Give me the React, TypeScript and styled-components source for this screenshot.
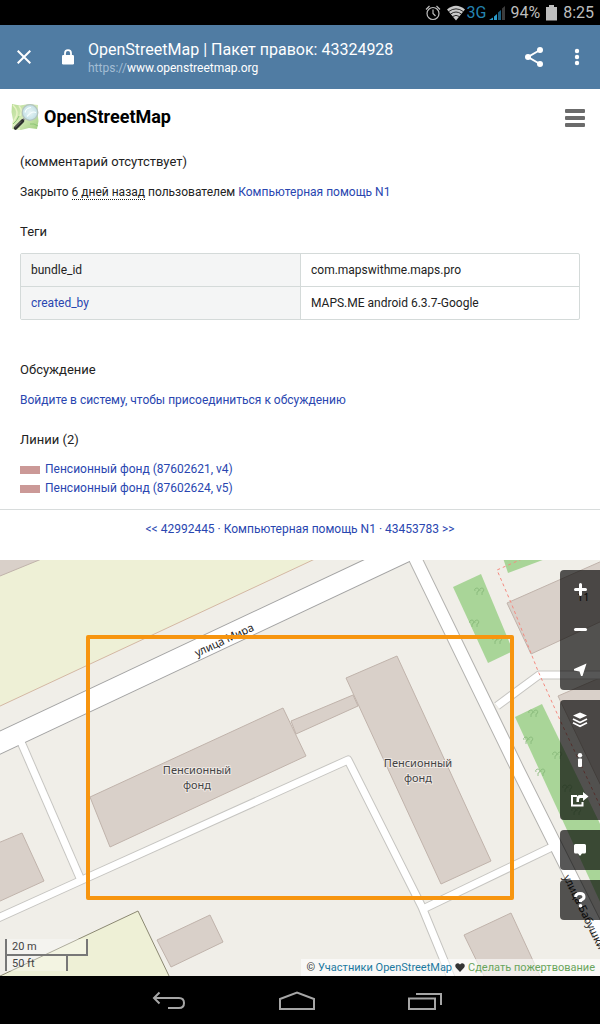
import React from "react";
import styled, { createGlobalStyle } from "styled-components";

const GlobalStyle = createGlobalStyle`
  * { box-sizing: border-box; }
  body {
    margin: 0;
    background: #fff;
    color: #222;
    font-family: Roboto, "Noto Sans", sans-serif;
    font-size: 12px;
    line-height: 20px;
  }
  a { color: #2946b0; text-decoration: none; }
  button { font: inherit; border: 0; padding: 0; background: none; cursor: pointer; }
  svg { display: block; }
`;

const Page = styled.div`
  display: flex;
  flex-direction: column;
  min-height: 100vh;
`;

const StatusBar = styled.div`
  display: flex;
  align-items: center;
  justify-content: flex-end;
  height: 25px;
  padding-right: 6px;
  background: #000;
  color: #bdbdbd;
  font-size: 16px;
`;

const StatusIcon = styled.span<{ $gap: number }>`
  margin-right: ${(p) => p.$gap}px;
`;

const Network = styled.span`
  margin-right: 3px;
  color: #2484b0;
`;

const StatusText = styled.span`
  margin-right: 6px;

  &:last-child { margin-right: 0; }
`;

const BrowserBar = styled.header`
  display: flex;
  align-items: center;
  height: 64px;
  padding: 0 11px 0 12px;
  background: #507ca3;
  color: #fff;
`;

const BarButton = styled.button`
  display: grid;
  place-items: center;
  width: 24px;
  height: 32px;
  color: #fff;
`;

const LockSlot = styled.span`
  margin: 0 13px 0 25px;
`;

const TitleBlock = styled.div`
  flex: 1;
  min-width: 0;
  padding-top: 2px;
  white-space: nowrap;
  overflow: hidden;
`;

const PageTitle = styled.div`
  font-size: 16px;
  line-height: 20px;
`;

const PageUrl = styled.div`
  font-size: 12px;
  line-height: 16px;
`;

const Scheme = styled.span`
  color: #a3bdd4;
`;

const BarActions = styled.div`
  display: flex;
  gap: 19px;
`;

const SiteHeader = styled.div`
  display: flex;
  align-items: center;
  justify-content: space-between;
  height: 55px;
  padding: 0 15px 0 10px;
`;

const Brand = styled.a`
  display: flex;
  align-items: center;
  gap: 4px;
  color: #000;
  font-size: 18px;
  font-weight: 700;
`;

const MenuButton = styled.button`
  display: flex;
  flex-direction: column;
  gap: 3px;
  width: 20px;
  padding-top: 2px;
`;

const MenuLine = styled.span`
  height: 4px;
  border-radius: 1px;
  background: #6b6b6b;
`;

const Content = styled.main`
  padding: 8px 20px 11px;
`;

const Comment = styled.p`
  margin: 0 0 10px;
  font-size: 13px;
`;

const Paragraph = styled.p`
  margin: 0 0 20px;
`;

const Age = styled.span`
  display: inline-block;
  line-height: 14px;
  border-bottom: 1px dotted #222;
`;

const Heading = styled.h4<{ $gap?: number }>`
  margin: 0 0 ${(p) => p.$gap ?? 10}px;
  font-size: 13px;
  font-weight: 400;
`;

const TagTable = styled.table`
  width: 100%;
  margin-bottom: 40px;
  border-collapse: separate;
  border-spacing: 0;
  border: 1px solid #d4dad9;
  border-radius: 2px;
  table-layout: fixed;

  tr + tr > * { border-top: 1px solid #d4dad9; }
`;

const TagKey = styled.th`
  height: 32px;
  padding: 6px 10px;
  background: #f4f5f5;
  font-weight: 400;
  text-align: left;
`;

const TagValue = styled.td`
  padding: 6px 10px;
  border-left: 1px solid #d4dad9;
`;

const WayList = styled.ul`
  margin: 0;
  padding: 0;
  list-style: none;
  line-height: 19px;
`;

const WayItem = styled.li`
  display: flex;
  align-items: center;
  gap: 5px;
`;

const Swatch = styled.span`
  width: 20px;
  height: 8px;
  background: #cb9997;
`;

const Pager = styled.nav`
  padding: 9px 20px 21px;
  border-top: 1px solid #d8dcdc;
  color: #2946b0;
  text-align: center;
`;

const MapPane = styled.section`
  position: relative;
  flex: 1;
  min-height: 416px;
  overflow: hidden;
  background: #f0eee8;
`;

const MapCanvas = styled.svg`
  position: absolute;
  inset: 0;
  width: 100%;
  height: 100%;
`;

const Controls = styled.div`
  position: absolute;
  top: 10px;
  right: 0;
  display: grid;
  gap: 10px;
`;

const ControlGroup = styled.div`
  overflow: hidden;
  border-radius: 4px 0 0 4px;
  background: rgba(0, 0, 0, 0.66);
`;

const ControlButton = styled.button`
  display: grid;
  place-items: center;
  width: 40px;
  height: 40px;
  color: #fff;
`;

const Scale = styled.div`
  position: absolute;
  left: 5px;
  bottom: 5px;
  color: #444;
  font-size: 11px;
  line-height: 15px;
`;

const ScaleBar = styled.div<{ $width: number; $last?: boolean }>`
  width: ${(p) => p.$width}px;
  height: ${(p) => (p.$last ? 15 : 17)}px;
  padding-left: 5px;
  border: 2px solid #777;
  border-top: 0;
  border-bottom-width: ${(p) => (p.$last ? 0 : 2)}px;
  background: rgba(255, 255, 255, 0.3);
`;

const Attribution = styled.div`
  position: absolute;
  right: 0;
  bottom: 0;
  display: flex;
  align-items: center;
  gap: 3px;
  padding: 0 5px;
  background: rgba(255, 255, 255, 0.6);
  color: #333;
  font-size: 11px;
  line-height: 17px;
  white-space: nowrap;

  a { color: #1b78a0; }
`;

const DonateLink = styled.a`
  && { color: #69a55c; }
`;

const NavBar = styled.footer`
  display: flex;
  align-items: center;
  justify-content: center;
  gap: 90px;
  height: 48px;
  padding: 2px 6px 0 0;
  background: #000;
  color: #a6a6a6;
`;

const NavButton = styled.button`
  display: grid;
  place-items: center;
  width: 38px;
  height: 40px;
  color: inherit;
`;

const AlarmIcon = () => (
  <svg width="16" height="16" viewBox="0 0 16 16" aria-hidden="true">
    <g fill="none" stroke="#bdbdbd" strokeWidth="1.2">
      <circle cx="8" cy="8.500" r="6" />
      <path d="M8 4.500V8.500L10.500 11M1 4.500L4.500 1M15 4.500L11.500 1" />
    </g>
  </svg>
);

const WifiIcon = () => (
  <svg width="20" height="16" viewBox="0 0 20 16" aria-hidden="true">
    <path d="M10 15.500L1 4.500Q10-3 19 4.500Z" fill="#c8c8c8" />
    <path d="M2.500 6.700Q10 1 17.500 6.700M4.600 9Q10 5 15.400 9M6.700 11.500Q10 9.200 13.300 11.500" fill="none" stroke="#000" strokeWidth=".8" />
  </svg>
);

const SignalIcon = () => (
  <svg width="17" height="16" viewBox="0 0 17 16" aria-hidden="true">
    <path d="M0 15L4 12.500V15ZM5 11.500L8 9V15H5Z" fill="#2b9bcb" />
    <path d="M9 7.500L12 5V15H9Z" fill="#1b5f80" />
    <path d="M13 3.500L16 1V15H13Z" fill="#3c3c3c" />
  </svg>
);

const BatteryIcon = () => (
  <svg width="11" height="16" viewBox="0 0 11 16" aria-hidden="true">
    <path d="M3 0H8V2H11V15.500H0V2H3Z" fill="#bdbdbd" />
  </svg>
);

const CloseIcon = () => (
  <svg width="14" height="14" viewBox="0 0 14 14" aria-hidden="true">
    <path d="M.7.7L13.300 13.300M13.300.7L.7 13.300" stroke="currentColor" strokeWidth="2" />
  </svg>
);

const LockIcon = () => (
  <svg width="14" height="16" viewBox="0 0 14 16" aria-hidden="true">
    <rect x="1" y="6" width="12" height="9.500" rx="1.200" fill="#fff" />
    <path d="M4 7V4.200A3 3 0 0 1 10 4.200V7" fill="none" stroke="#fff" strokeWidth="1.800" />
  </svg>
);

const ShareIcon = () => (
  <svg width="20" height="22" viewBox="0 0 20 22" aria-hidden="true">
    <path d="M16 4L4 11L16 18" fill="none" stroke="currentColor" strokeWidth="2" />
    <circle cx="16" cy="4" r="3" fill="currentColor" />
    <circle cx="4" cy="11" r="3" fill="currentColor" />
    <circle cx="16" cy="18" r="3" fill="currentColor" />
  </svg>
);

const MoreIcon = () => (
  <svg width="6" height="18" viewBox="0 0 6 18" aria-hidden="true">
    <g fill="currentColor">
      <circle cx="3" cy="3" r="2.200" />
      <circle cx="3" cy="9" r="2.200" />
      <circle cx="3" cy="15" r="2.200" />
    </g>
  </svg>
);

const HeartIcon = () => (
  <svg width="10" height="9" viewBox="0 0 10 9" aria-hidden="true">
    <path d="M5 9L1 4.800Q-.5 2.500 1 1Q3-.8 5 1.500Q7-.8 9 1Q10.500 2.500 9 4.800Z" fill="#333" />
  </svg>
);

const Logo = () => (
  <svg width="30" height="30" viewBox="0 0 30 30" aria-hidden="true">
    <defs>
      <linearGradient id="paper" x1="0" y1="0" x2="1" y2="1">
        <stop offset="0" stopColor="#b9dd97" />
        <stop offset=".5" stopColor="#d5eab8" />
        <stop offset="1" stopColor="#9fce7f" />
      </linearGradient>
      <radialGradient id="lens">
        <stop offset="0" stopColor="#e9f5f6" />
        <stop offset="1" stopColor="#c3e0e6" />
      </radialGradient>
    </defs>
    <path d="M2 2L10 3.500L19 2L28 3L27.500 11L28.500 19L27 27L19 26L11 28L2 27L3 18L1.500 10Z" fill="url(#paper)" />
    <path d="M3 3Q10 10 5 17T10 27M9 4Q13 8 10 14" fill="none" stroke="#e6f2c4" strokeWidth="1.500" />
    <path d="M20 22Q24 21 28 24M3 22Q7 19 9 14" fill="none" stroke="#8cc576" strokeWidth="1" />
    <path d="M14.500 16.500L12 19" stroke="#999" strokeWidth="2.400" />
    <path d="M12.500 19L5.500 26" stroke="#2d302d" strokeWidth="3.600" strokeLinecap="round" />
    <path d="M11 19.500L5 25.500" stroke="#777" strokeWidth="1" />
    <circle cx="20" cy="10.500" r="7.800" fill="url(#lens)" stroke="#b4c4bf" strokeWidth="1.300" />
    <path d="M15 10.500Q16 6 21 5.500M17 14.500Q22 8.500 26 10.500" fill="none" stroke="#f8ffff" strokeWidth="1.200" />
  </svg>
);

type Glyph = "plus" | "minus" | "locate" | "layers" | "info" | "share" | "note" | "query";

const glyphs: Record<Glyph, React.ReactNode> = {
  plus: <path d="M10.500 4.500V14.500M5.500 9.500H15.500" stroke="currentColor" strokeWidth="3" strokeLinecap="round" />,
  minus: <path d="M5.500 9.500H15.500" stroke="currentColor" strokeWidth="3" strokeLinecap="round" />,
  locate: <path d="M16.500 3.500L4 9V10.500L9.500 11.500L11 16H12.500Z" fill="currentColor" />,
  layers: (
    <>
      <path d="M10 2.500L17 5.500L10 8.800L3 5.500Z" fill="currentColor" />
      <path d="M3 9L10 12.500L17 9M3 12.700L10 16.200L17 12.700" fill="none" stroke="currentColor" strokeWidth="1.800" />
    </>
  ),
  info: (
    <>
      <circle cx="10" cy="5.200" r="2.200" fill="currentColor" />
      <rect x="8" y="8.600" width="4" height="8.400" rx="1" fill="currentColor" />
    </>
  ),
  share: (
    <>
      <path d="M7 6H2V15.500H12.500V12" fill="none" stroke="currentColor" strokeWidth="2" />
      <path d="M6.500 12V9Q6.500 5 10 5H13V2L18.500 6.500L13 11V8H10.500Q9 8 9 10V12Z" fill="currentColor" />
    </>
  ),
  note: (
    <path d="M5.500 4H14.500Q16 4 16 5.500V12Q16 13.500 14.500 13.500H12L10 16L8 13.500H5.500Q4 13.500 4 12V5.500Q4 4 5.500 4Z" fill="currentColor" />
  ),
  query: (
    <>
      <path d="M5.500 7Q6 3.500 10 3.500Q14 3.500 14 7Q14 9 10.500 10.500V12" fill="none" stroke="currentColor" strokeWidth="3" />
      <circle cx="10.500" cy="15.700" r="1.800" fill="currentColor" />
    </>
  ),
};

const groups: { name: Glyph; label: string }[][] = [
  [
    { name: "plus", label: "Приблизить" },
    { name: "minus", label: "Отдалить" },
    { name: "locate", label: "Показать моё местоположение" },
  ],
  [
    { name: "layers", label: "Слои" },
    { name: "info", label: "Условные знаки" },
    { name: "share", label: "Поделиться" },
  ],
  [{ name: "note", label: "Добавить заметку" }],
  [{ name: "query", label: "Что здесь?" }],
];

const buildings = [
  "-2,-2 44,-2 0,16 -2,17",
  "90,237 283,148 306,196 110,287",
  "291,161 353,135 358,146 296,174",
  "346,118 397,96 491,301 441,324",
  "-2,283 22,273 44,321 -2,342",
  "157,380 210,355 223,382 171,407",
  "464,375 511,353 541,418 485,418",
  "507,43 602,1 602,61 531,94",
  "558,136 602,117 602,228",
];

const greens = ["453,27 481,14 513,91 488,103", "503,-2 508,13 548,-2", "515,157 542,144 602,268 602,346"];

const serviceRoads = ["-2,358 82,320 348,200 422,347 452,420", "21,182 80,318", "423,349 552,287", "497,146 539,115 602,115"];

const trees = [
  [479, 31], [474, 63], [497, 80], [533, 153], [528, 180], [540, 212], [557, 195], [567, 228], [576, 251],
];

const MapDrawing = () => (
  <MapCanvas viewBox="0 0 600 416" preserveAspectRatio="xMidYMid slice" role="img" aria-label="Карта">
    <rect x="-2000" y="-2000" width="5000" height="5000" fill="#f0eee8" />
    <polygon points="-2,-2 317,-2 300,6 -2,147" fill="#eef0d6" stroke="#d4b8a3" />
    <polygon points="-2,417 138,351 170,418" fill="#eef0d6" stroke="#8b8872" />
    {greens.map((points) => (
      <polygon key={points} points={points} fill="#a9d598" />
    ))}
    {trees.map(([x, y]) => (
      <path
        key={`${x}-${y}`}
        d={`M${x - 2} ${y + 4}V${y + 1}M${x + 3} ${y + 4}V${y + 1}M${x - 4} ${y}A2 2 0 1 1 ${x - 2} ${y + 1}M${x + 1} ${y}A2 2 0 1 1 ${x + 3} ${y + 1}`}
        fill="none"
        stroke="#86b879"
        strokeWidth=".8"
      />
    ))}
    {buildings.map((points) => (
      <polygon key={points} points={points} fill="#d9d0c9" stroke="#c0b3ab" />
    ))}
    <g fill="none" strokeLinejoin="round">
      <g stroke="#c6c5c1" strokeWidth="9">
        {serviceRoads.map((points) => (
          <polyline key={points} points={points} />
        ))}
      </g>
      <polyline points="412,-8 517,208 607,388" stroke="#b4b3b0" strokeWidth="14" />
      <polyline points="-20,192 420,-15" stroke="#a2a2a2" strokeWidth="22" />
      <g stroke="#fff" strokeWidth="7">
        {serviceRoads.map((points) => (
          <polyline key={points} points={points} />
        ))}
      </g>
      <polyline points="412,-8 517,208 607,388" stroke="#fff" strokeWidth="12" />
      <polyline points="-20,192 420,-15" stroke="#fff" strokeWidth="20" />
      <path d="M522-1L497 10L512 45L538 111L560 160L602 250" stroke="#f58a80" strokeDasharray="3 3" />
    </g>
    <g fontFamily="'Noto Sans', sans-serif" fontSize="11" fill="#222">
      <text transform="translate(197 97) rotate(-25)">улица Мира</text>
      <text transform="translate(563 317) rotate(64)">улица Бабушки</text>
      <text x="577" y="41">11</text>
      <g textAnchor="middle" fill="#444" stroke="#efe9e5" strokeWidth="2" strokeLinejoin="round" paintOrder="stroke">
        <text x="197" y="214">Пенсионный</text>
        <text x="197" y="229">фонд</text>
        <text x="418" y="207">Пенсионный</text>
        <text x="418" y="222">фонд</text>
      </g>
    </g>
    <rect x="88" y="77" width="424" height="261" fill="none" stroke="#f7950f" strokeWidth="4" strokeLinejoin="round" />
  </MapCanvas>
);

const BackIcon = () => (
  <svg width="34" height="20" viewBox="0 0 34 20" aria-hidden="true">
    <path d="M7.500 1.500L2 7L7.500 12.500M2 7H27Q32 7 32 12Q32 17 27 17H16" fill="none" stroke="currentColor" strokeWidth="2" />
  </svg>
);

const HomeIcon = () => (
  <svg width="38" height="20" viewBox="0 0 38 20" aria-hidden="true">
    <path d="M2 18V8L19 1.500L36 8V18Z" fill="none" stroke="currentColor" strokeWidth="2" />
  </svg>
);

const RecentsIcon = () => (
  <svg width="36" height="20" viewBox="0 0 36 20" aria-hidden="true">
    <path d="M2 7.500H28V18H2ZM9 3H34V14" fill="none" stroke="currentColor" strokeWidth="2" />
  </svg>
);

export default function App() {
  return (
    <Page>
      <GlobalStyle />
      <StatusBar>
        <StatusIcon $gap={5}>
          <AlarmIcon />
        </StatusIcon>
        <StatusIcon $gap={1}>
          <WifiIcon />
        </StatusIcon>
        <Network>3G</Network>
        <StatusIcon $gap={4}>
          <SignalIcon />
        </StatusIcon>
        <StatusText>94%</StatusText>
        <StatusIcon $gap={6}>
          <BatteryIcon />
        </StatusIcon>
        <StatusText>8:25</StatusText>
      </StatusBar>
      <BrowserBar>
        <BarButton aria-label="Закрыть">
          <CloseIcon />
        </BarButton>
        <LockSlot>
          <LockIcon />
        </LockSlot>
        <TitleBlock>
          <PageTitle>OpenStreetMap | Пакет правок: 43324928</PageTitle>
          <PageUrl>
            <Scheme>https://</Scheme>www.openstreetmap.org
          </PageUrl>
        </TitleBlock>
        <BarActions>
          <BarButton aria-label="Поделиться">
            <ShareIcon />
          </BarButton>
          <BarButton aria-label="Ещё">
            <MoreIcon />
          </BarButton>
        </BarActions>
      </BrowserBar>
      <SiteHeader>
        <Brand href="#home">
          <Logo />
          OpenStreetMap
        </Brand>
        <MenuButton aria-label="Меню">
          <MenuLine />
          <MenuLine />
          <MenuLine />
        </MenuButton>
      </SiteHeader>
      <Content>
        <Comment>(комментарий отсутствует)</Comment>
        <Paragraph>
          Закрыто <Age>6 дней назад</Age> пользователем <a href="#user">Компьютерная помощь N1</a>
        </Paragraph>
        <Heading $gap={11}>Теги</Heading>
        <TagTable>
          <tbody>
            <tr>
              <TagKey scope="row">bundle_id</TagKey>
              <TagValue>com.mapswithme.maps.pro</TagValue>
            </tr>
            <tr>
              <TagKey scope="row">
                <a href="#created_by">created_by</a>
              </TagKey>
              <TagValue>MAPS.ME android 6.3.7-Google</TagValue>
            </tr>
          </tbody>
        </TagTable>
        <Heading>Обсуждение</Heading>
        <Paragraph>
          <a href="#login">Войдите в систему, чтобы присоединиться к обсуждению</a>
        </Paragraph>
        <Heading>Линии (2)</Heading>
        <WayList>
          <WayItem>
            <Swatch />
            <a href="#way-87602621">Пенсионный фонд (87602621, v4)</a>
          </WayItem>
          <WayItem>
            <Swatch />
            <a href="#way-87602624">Пенсионный фонд (87602624, v5)</a>
          </WayItem>
        </WayList>
      </Content>
      <Pager>
        <a href="#prev">&lt;&lt; 42992445</a> · <a href="#user">Компьютерная помощь N1</a> ·{" "}
        <a href="#next">43453783 &gt;&gt;</a>
      </Pager>
      <MapPane>
        <MapDrawing />
        <Controls>
          {groups.map((group) => (
            <ControlGroup key={group[0].name}>
              {group.map(({ name, label }) => (
                <ControlButton key={name} aria-label={label}>
                  <svg width="20" height="20" viewBox="0 0 20 20" aria-hidden="true">
                    {glyphs[name]}
                  </svg>
                </ControlButton>
              ))}
            </ControlGroup>
          ))}
        </Controls>
        <Scale>
          <ScaleBar $width={83}>20 m</ScaleBar>
          <ScaleBar $width={63} $last>
            50 ft
          </ScaleBar>
        </Scale>
        <Attribution>
          <span>©</span>
          <a href="#copyright">Участники OpenStreetMap</a>
          <HeartIcon />
          <DonateLink href="#donate">Сделать пожертвование</DonateLink>
        </Attribution>
      </MapPane>
      <NavBar>
        <NavButton aria-label="Назад">
          <BackIcon />
        </NavButton>
        <NavButton aria-label="Домой">
          <HomeIcon />
        </NavButton>
        <NavButton aria-label="Недавние">
          <RecentsIcon />
        </NavButton>
      </NavBar>
    </Page>
  );
}
